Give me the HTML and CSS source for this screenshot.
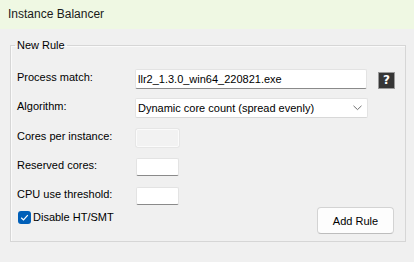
FILE: index.html
```html
<!DOCTYPE html>
<html>
<head>
<meta charset="utf-8">
<link rel="stylesheet" href="styles.css">
</head>
<body>
<div class="titlebar">Instance Balancer</div>
<fieldset class="group">
  <legend class="legend">New Rule</legend>
  <div class="row row-process">
    <span class="label">Process match:</span>
    <div class="field wide">llr2_1.3.0_win64_220821.exe</div>
    <span class="help">?</span>
  </div>
  <div class="row row-algo">
    <span class="label">Algorithm:</span>
    <div class="field wide select">
      <span>Dynamic core count (spread evenly)</span>
      <svg class="chev" width="9" height="6" viewBox="0 0 9 6"><path d="M0.5 0.8 L4.5 4.6 L8.5 0.8" fill="none" stroke="#707070" stroke-width="1"/></svg>
    </div>
  </div>
  <div class="row row-small">
    <span class="label">Cores per instance:</span>
    <div class="field small disabled"></div>
  </div>
  <div class="row row-small">
    <span class="label">Reserved cores:</span>
    <div class="field small"></div>
  </div>
  <div class="row row-small">
    <span class="label">CPU use threshold:</span>
    <div class="field small"></div>
  </div>
  <div class="row row-last">
    <label class="check">
      <span class="box"><svg width="13" height="13" viewBox="0 0 13 13"><path d="M3.2 6.8 L5.5 9 L9.8 4.2" fill="none" stroke="#fff" stroke-width="1.2"/></svg></span>
      <span class="check-text">Disable HT/SMT</span>
    </label>
    <button class="btn">Add Rule</button>
  </div>
</fieldset>
</body>
</html>
```
FILE: styles.css
```css
html, body {
  margin: 0;
  padding: 0;
}
body {
  width: 414px;
  height: 262px;
  overflow: hidden;
  background: #f0f0f0;
  font-family: "Liberation Sans", Arial, sans-serif;
  font-size: 11px;
  color: #000;
}
.titlebar {
  height: 29px;
  box-sizing: border-box;
  padding: 7px 0 0 8px;
  background: #eff8e3;
  font-size: 12px;
  line-height: 15px;
  color: #1a1a1a;
}
.group {
  margin: 9px 0 0 10px;
  width: 396px;
  box-sizing: border-box;
  padding: 17px 10px 7px 6px;
  border: 1px solid #d6d6d6;
  box-shadow: inset 1px 1px 0 #fafafa;
  min-inline-size: 0;
}
.legend {
  margin-left: -2px;
  padding: 0 2px;
  font-size: 11px;
  line-height: 14px;
}
.row {
  display: flex;
  align-items: center;
}
.row-process { height: 20px; }
.row-algo { height: 20px; margin-top: 9px; }
.row-small { height: 18px; margin-top: 11px; }
.label {
  width: 118px;
  flex: none;
  margin-bottom: 4px;
  white-space: nowrap;
}
.field {
  box-sizing: border-box;
  background: #fff;
  border: 1px solid #e3e3e3;
  border-bottom-color: #8a8a8a;
  border-radius: 2px;
  height: 100%;
}
.wide {
  width: 233px;
  padding: 0 0 0 2px;
  line-height: 18px;
  white-space: nowrap;
}
.select {
  display: flex;
  align-items: center;
  justify-content: space-between;
  border-bottom-color: #d8d8d8;
  padding-right: 5px;
}
.chev {
  display: block;
  margin-bottom: 1px;
}
.small {
  width: 43px;
  margin-left: 1px;
}
.disabled {
  background: #f2f2f2;
  border: 1px solid #fbfbfb;
  box-shadow: 0 0 0 1px #e6e6e6;
}
.help {
  margin-left: 11px;
  width: 17px;
  height: 17px;
  box-sizing: border-box;
  background: #363636;
  border: 1px solid #9a9a9a;
  color: #fff;
  font-family: "DejaVu Sans", sans-serif;
  font-weight: bold;
  font-size: 12px;
  line-height: 15px;
  text-align: center;
  margin-top: 3px;
}
.row-last {
  margin-top: 2px;
  align-items: flex-start;
  justify-content: space-between;
  height: 27px;
}
.check {
  display: flex;
  align-items: center;
  margin-top: 4px;
  margin-left: 1px;
}
.box {
  width: 13px;
  height: 13px;
  border-radius: 3px;
  background: #005fb8;
  display: block;
}
.box svg { display: block; }
.check-text {
  margin-left: 2px;
  line-height: 13px;
}
.btn {
  width: 77px;
  height: 27px;
  margin-right: 1px;
  background: #fdfdfd;
  border: 1px solid #d3d3d3;
  border-bottom-color: #bdbdbd;
  border-radius: 4px;
  font-family: "Liberation Sans", Arial, sans-serif;
  font-size: 11px;
  color: #000;
  padding: 0;
}
```
